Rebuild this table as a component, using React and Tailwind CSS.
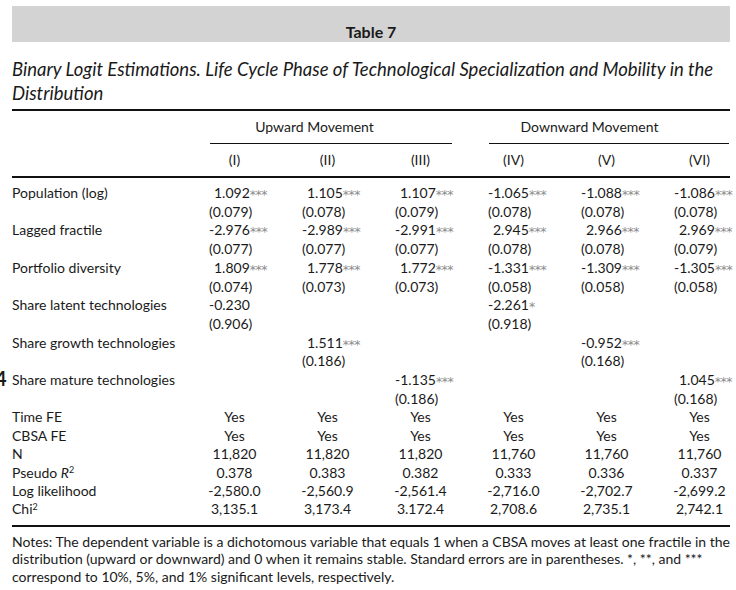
import React from "react";

const cols = ["(I)", "(II)", "(III)", "(IV)", "(V)", "(VI)"];

// coefficient rows: [label, [[coef, stars, se] | null x6]]
const coefRows = [
  ["Population (log)", [
    ["1.092", "***", "(0.079)"], ["1.105", "***", "(0.078)"], ["1.107", "***", "(0.079)"],
    ["-1.065", "***", "(0.078)"], ["-1.088", "***", "(0.078)"], ["-1.086", "***", "(0.078)"],
  ]],
  ["Lagged fractile", [
    ["-2.976", "***", "(0.077)"], ["-2.989", "***", "(0.077)"], ["-2.991", "***", "(0.077)"],
    ["2.945", "***", "(0.078)"], ["2.966", "***", "(0.078)"], ["2.969", "***", "(0.079)"],
  ]],
  ["Portfolio diversity", [
    ["1.809", "***", "(0.074)"], ["1.778", "***", "(0.073)"], ["1.772", "***", "(0.073)"],
    ["-1.331", "***", "(0.058)"], ["-1.309", "***", "(0.058)"], ["-1.305", "***", "(0.058)"],
  ]],
  ["Share latent technologies", [
    ["-0.230", "", "(0.906)"], null, null, ["-2.261", "*", "(0.918)"], null, null,
  ]],
  ["Share growth technologies", [
    null, ["1.511", "***", "(0.186)"], null, null, ["-0.952", "***", "(0.168)"], null,
  ]],
  ["Share mature technologies", [
    null, null, ["-1.135", "***", "(0.186)"], null, null, ["1.045", "***", "(0.168)"],
  ]],
];

const statRows = [
  ["Time FE", ["Yes", "Yes", "Yes", "Yes", "Yes", "Yes"]],
  ["CBSA FE", ["Yes", "Yes", "Yes", "Yes", "Yes", "Yes"]],
  ["N", ["11,820", "11,820", "11,820", "11,760", "11,760", "11,760"]],
  ["pseudo", ["0.378", "0.383", "0.382", "0.333", "0.336", "0.337"]],
  ["Log likelihood", ["-2,580.0", "-2,560.9", "-2,561.4", "-2,716.0", "-2,702.7", "-2,699.2"]],
  ["chi", ["3,135.1", "3,173.4", "3.172.4", "2,708.6", "2,735.1", "2,742.1"]],
];

const grid = "grid grid-cols-[176px_93px_93px_93px_93px_93px_77px]";
const centerPad = ["", "", "", "", "", "pl-[16px]"];

function Label({ name }) {
  if (name === "pseudo")
    return (
      <span>
        Pseudo <i>R</i>
        <sup className="text-[9px]">2</sup>
      </span>
    );
  if (name === "chi")
    return (
      <span>
        Chi<sup className="text-[9px]">2</sup>
      </span>
    );
  return <span>{name}</span>;
}

export default function App() {
  return (
    <div className="relative w-[736px] h-[590px] overflow-hidden bg-white text-[#1a1a1a] font-['Lato','Open_Sans',sans-serif]">
      <div className="absolute left-[-5px] top-[366px] text-[20px] font-bold leading-[24px]">4</div>
      <div className="pt-[6px] pl-[12px] pr-[6px]">
        <div className="h-[36px] bg-[#d3d3d3] pt-[16px] text-center text-[16px] font-bold leading-[20px]">
          Table 7
        </div>
        <div className="mt-[15px] text-[18.5px] italic leading-[24px]">
          Binary Logit Estimations. Life Cycle Phase of Technological Specialization and Mobility in the
          Distribution
        </div>

        <div className="mt-[4px] h-[2px] bg-[#111]" />
        <div className={`${grid} mt-[7px] text-[14px] leading-[18.5px]`}>
          <div />
          <div className="col-span-3">
            <div className="pr-[26px] text-center">Upward Movement</div>
            <div className="ml-[22px] mr-[15px] mt-[6px] h-px bg-[#111]" />
          </div>
          <div className="col-span-3">
            <div className="pr-[18px] text-center">Downward Movement</div>
            <div className="ml-[22px] mr-[1px] mt-[6px] h-px bg-[#111]" />
          </div>
        </div>
        <div className={`${grid} mt-[7px] text-[14px] leading-[18.5px]`}>
          <div />
          {cols.map((c, i) => (
            <div key={c} className={`text-center ${centerPad[i]}`}>
              {c}
            </div>
          ))}
        </div>
        <div className="mt-[7px] h-[2px] bg-[#111]" />

        <div className="mt-[6px] text-[14px] leading-[18.7px]">
          {coefRows.map(([label, vals]) => (
            <div key={label} className={grid}>
              <div>{label}</div>
              {vals.map((v, i) => (
                <div key={i} className="pl-[21px]">
                  {v && (
                    <>
                      <div className={v[0].startsWith("-") ? "" : "pl-[5px]"}>
                        {v[0]}
                        <span className="relative top-[1px] font-['DejaVu_Sans',sans-serif] text-[12.5px] leading-[0] tracking-[-0.5px] text-[#8c8c8c]">
                          {v[1]}
                        </span>
                      </div>
                      <div>{v[2]}</div>
                    </>
                  )}
                </div>
              ))}
            </div>
          ))}
        </div>
        <div className="text-[14px] leading-[18.4px]">
          {statRows.map(([label, vals]) => (
            <div key={label} className={grid}>
              <div>
                <Label name={label} />
              </div>
              {vals.map((v, i) => (
                <div key={i} className={`text-center ${centerPad[i]}`}>
                  {v}
                </div>
              ))}
            </div>
          ))}
        </div>
        <div className="mt-[6px] h-[2px] bg-[#111]" />

        <div className="mt-[6px] text-[14px] leading-[17.5px] whitespace-nowrap">
          <div>
            Notes: The dependent variable is a dichotomous variable that equals 1 when a CBSA moves at least one fractile in the
          </div>
          <div>
            distribution (upward or downward) and 0 when it remains stable. Standard errors are in parentheses. *, **, and ***
          </div>
          <div>correspond to 10%, 5%, and 1% significant levels, respectively.</div>
        </div>
      </div>
    </div>
  );
}
